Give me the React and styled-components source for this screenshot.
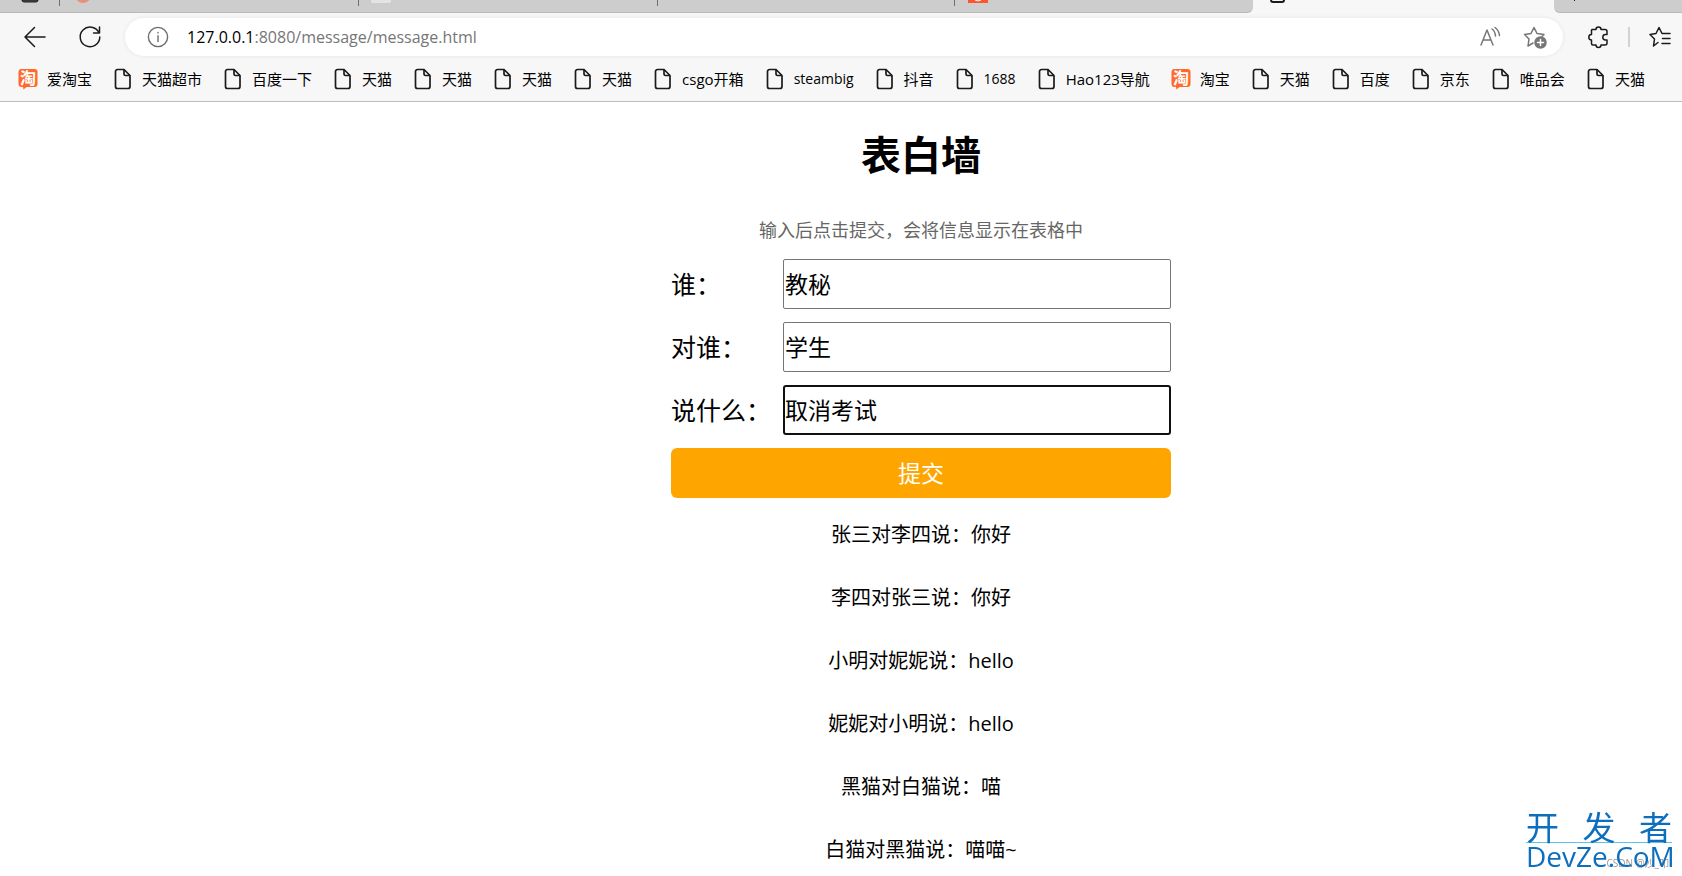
import { useState } from "react";
import styled, { createGlobalStyle } from "styled-components";

const GlobalStyle = createGlobalStyle`
  * {
    box-sizing: border-box;
  }
  body {
    margin: 0;
    background: #fff;
    color: #000;
    font-family: "Open Sans", "Noto Sans CJK SC", sans-serif;
    overflow: hidden;
  }
`;

const TabStrip = styled.div`
  display: flex;
  height: 13px;
  background: #f7f7f7;
  overflow: hidden;
`;

const Tab = styled.div`
  display: flex;
  align-items: flex-start;
  flex: ${(p) => p.$size} 1 ${(p) => p.$size}px;
  min-width: 0;
  padding-left: ${(p) => p.$pad || 12}px;
  background: ${(p) => (p.$active ? "#f7f7f7" : "#cdcdcd")};
  border-bottom: 1px solid ${(p) => (p.$active ? "#f7f7f7" : "#b8b8b8")};
  border-radius: ${(p) => p.$round || "0"};
`;

const TabLine = styled.span`
  width: 1px;
  background: linear-gradient(#6f6f6f 6px, #cdcdcd 6px);
  border-bottom: 1px solid #b8b8b8;
`;

const Toolbar = styled.div`
  display: flex;
  align-items: center;
  height: 47px;
  padding: 0 10px 0 23px;
  background: #f7f7f7;
`;

const IconButton = styled.button`
  display: flex;
  padding: 0;
  margin: 0 ${(p) => p.$right || 0}px 0 0;
  border: 0;
  background: none;
  color: ${(p) => p.$color || "#1b1b1b"};
`;

const AddressBar = styled.div`
  display: flex;
  align-items: center;
  flex: 1;
  height: 38px;
  margin-right: 23px;
  padding: 0 16px 0 22px;
  border-radius: 19px;
  background: #fff;
  box-shadow: 0 0 4px rgba(0, 0, 0, 0.08);
`;

const Url = styled.div`
  flex: 1;
  margin-left: 18px;
  color: #767676;
  font-size: 16px;
  line-height: 24px;
  b {
    color: #000;
    font-weight: 400;
  }
`;

const Divider = styled.span`
  width: 2px;
  height: 20px;
  margin-right: 18px;
  background: #d2d2d2;
`;

const Bookmarks = styled.nav`
  display: flex;
  align-items: center;
  gap: 21px;
  height: 42px;
  padding: 0 18px 4px;
  background: #f7f7f7;
  border-bottom: 1px solid #bdbdbd;
`;

const Bookmark = styled.a`
  display: flex;
  align-items: center;
  gap: 9px;
  color: #000;
  font-size: ${(p) => (p.$latin ? 14 : 15)}px;
  line-height: 20px;
  white-space: nowrap;
  text-decoration: none;
`;

const Page = styled.main`
  padding-left: 160px;
`;

const Wall = styled.div`
  width: 500px;
  margin: 0 auto;
  text-align: center;
`;

const Title = styled.h1`
  margin: 0;
  padding: 25px 0;
  font-size: 40px;
  line-height: 56px;
`;

const Hint = styled.p`
  margin: 0;
  padding: 10px 0 16px;
  color: #666;
  font-size: 18px;
  line-height: 25px;
`;

const Form = styled.form`
  display: grid;
  gap: 13px;
`;

const Row = styled.div`
  display: flex;
  height: 50px;
`;

const Label = styled.label`
  width: 112px;
  font-size: 25px;
  line-height: 50px;
  text-align: left;
`;

const TextInput = styled.input`
  flex: 1;
  min-width: 0;
  height: 50px;
  padding: 0 1px 2px;
  border: 1px solid #767676;
  border-radius: 2px;
  outline: none;
  font-family: inherit;
  font-size: 23px;
  &:focus {
    padding: 0 0 2px;
    border: 2px solid #101010;
    border-radius: 3px;
  }
`;

const Submit = styled.button`
  height: 50px;
  padding: 0 0 2px;
  border: 0;
  border-radius: 6px;
  background: orange;
  color: #fff;
  font-family: inherit;
  font-size: 23px;
`;

const Messages = styled.ul`
  display: grid;
  gap: 13px;
  margin: 0;
  padding: 12px 0 0;
  list-style: none;
`;

const Message = styled.li`
  font-size: 20px;
  line-height: 50px;
`;

const Watermark = styled.div`
  position: fixed;
  right: 10px;
  bottom: 7px;
  width: 146px;
  color: #0d6ebd;
`;

const MarkTop = styled.div`
  display: flex;
  justify-content: space-between;
  border-bottom: 1px solid #59c4e8;
  font-size: 33px;
  line-height: 28px;
`;

const MarkBottom = styled.div`
  font-size: 28px;
  line-height: 26px;
`;

const Credit = styled.div`
  position: absolute;
  right: 3px;
  bottom: 0;
  z-index: -1;
  color: #999;
  font-size: 10px;
  line-height: 12px;
`;

function Svg({ size = 24, children }) {
  return (
    <svg
      width={size}
      height={size}
      viewBox="0 0 24 24"
      fill="none"
      stroke="currentColor"
      strokeWidth="1.5"
      strokeLinecap="round"
      strokeLinejoin="round"
    >
      {children}
    </svg>
  );
}

function PageIcon() {
  return (
    <svg width="20" height="22" viewBox="0 0 20 22" fill="none" stroke="#1b1b1b" strokeWidth="1.7" strokeLinejoin="round">
      <path d="M4.500 1.500H11l6 6V18.500a2 2 0 0 1-2 2H4.500a2 2 0 0 1-2-2V3.500a2 2 0 0 1 2-2z" />
      <path d="M11 1.500v4.500a1.500 1.500 0 0 0 1.500 1.500H17" />
    </svg>
  );
}

function TaobaoIcon() {
  return (
    <svg width="20" height="22" viewBox="0 0 20 22" overflow="visible">
      <path d="M3.500 1h13A3 3 0 0 1 19.500 4v12a3 3 0 0 1-3 3H8.500L5.500 21.500 5 19H3.500a3 3 0 0 1-3-3V4a3 3 0 0 1 3-3z" fill="#ff6a2c" />
      <text x="10" y="16" textAnchor="middle" fontSize="16" fontWeight="700" fill="#fff">淘</text>
    </svg>
  );
}

const bookmarks = [
  "爱淘宝", "天猫超市", "百度一下", "天猫", "天猫", "天猫", "天猫", "csgo开箱", "steambig",
  "抖音", "1688", "Hao123导航", "淘宝", "天猫", "百度", "京东", "唯品会", "天猫",
];

const messages = [
  "张三对李四说：你好",
  "李四对张三说：你好",
  "小明对妮妮说：hello",
  "妮妮对小明说：hello",
  "黑猫对白猫说：喵",
  "白猫对黑猫说：喵喵~",
];

const fields = [
  { id: "from", label: "谁：" },
  { id: "to", label: "对谁：" },
  { id: "say", label: "说什么：" },
];

function Browser() {
  return (
    <header>
      <TabStrip>
        <Tab $size={59} $pad={21}>
          <svg width="18" height="3"><path d="M1 0q0 2 2 2h12q2 0 2-2z" fill="#555" stroke="#1b1b1b" /></svg>
        </Tab>
        <TabLine />
        <Tab $size={298} $pad={15}>
          <svg width="16" height="4"><circle cx="8" cy="-5" r="8" fill="#e8917a" /></svg>
        </Tab>
        <TabLine />
        <Tab $size={298}>
          <svg width="20" height="4"><rect y="-8" width="20" height="11" rx="2" fill="#e4e4e4" /></svg>
        </Tab>
        <TabLine />
        <Tab $size={297} />
        <TabLine />
        <Tab $size={298} $pad={13} $round="0 0 6px 0">
          <svg width="20" height="3"><rect width="20" height="3" fill="#ff5430" /><path d="M7 0q3 2 6 0" stroke="#fff" fill="none" /></svg>
        </Tab>
        <Tab $size={301} $pad={17} $active>
          <svg width="15" height="4"><path d="M1 0q0 2 2 2h9q2 0 2-2" fill="none" stroke="#1b1b1b" strokeWidth="2" /></svg>
        </Tab>
        <Tab $size={128} $pad={20} $round="0 0 0 6px">
          <svg width="2" height="2"><rect width="1" height="1" fill="#1b1b1b" /></svg>
        </Tab>
      </TabStrip>
      <Toolbar>
        <IconButton aria-label="返回" $right={31}>
          <Svg><path d="M22 12H2.500M11.500 2.500 2 12l9.500 9.500" /></Svg>
        </IconButton>
        <IconButton aria-label="刷新" $right={23}>
          <Svg><path d="M21 8A9.800 9.800 0 1 0 21.800 12M21.500 2v6h-6" /></Svg>
        </IconButton>
        <AddressBar>
          <IconButton aria-label="网站信息" $color="#6b6b6b">
            <Svg size={22}><circle cx="12" cy="12" r="10.500" /><path d="M12 10.500v6.500M12 7v.5" /></Svg>
          </IconButton>
          <Url><b>127.0.0.1</b>:8080/message/message.html</Url>
          <IconButton aria-label="朗读" $right={21} $color="#767676">
            <Svg><path d="M3 20 9 5l6 15M5 15h8M14 4q3 2 3.500 7M17 2.500q4 3 4.500 8" /></Svg>
          </IconButton>
          <IconButton aria-label="收藏" $color="#767676">
            <Svg>
              <path d="M10 18l-5 3 1-7L1.500 9.500l6.500-1L11 2.500l3 6 7 1-2 2" />
              <circle cx="17.500" cy="17.500" r="5.500" fill="currentColor" />
              <path d="M17.500 14.500v6M14.500 17.500h6" stroke="#fff" />
            </Svg>
          </IconButton>
        </AddressBar>
        <IconButton aria-label="扩展" $right={18}>
          <Svg>
            <path d="M6 4.500h4a2.500 2.500 0 0 1 5 0h4a2 2 0 0 1 2 2v3h-1.500a2.700 2.700 0 0 0 0 5.400H21v3a2 2 0 0 1-2 2h-4a2.500 2.500 0 0 1-5 0H7a1.500 1.500 0 0 1-1.500-1.500V15a2.700 2.700 0 0 1 0-5.400V5z" />
          </Svg>
        </IconButton>
        <Divider />
        <IconButton aria-label="收藏夹">
          <Svg><path d="M10 17.500l-4.500 3.500 1-7L2 9.500l6-1L11 2.500l3 6h8M14.500 13.500H22M14 18.500h8" /></Svg>
        </IconButton>
      </Toolbar>
      <Bookmarks>
        {bookmarks.map((name, i) => (
          <Bookmark key={i} href="#" $latin={/^\w+$/.test(name)}>
            {name.includes("淘宝") ? <TaobaoIcon /> : <PageIcon />}
            {name}
          </Bookmark>
        ))}
      </Bookmarks>
    </header>
  );
}

function App() {
  const [values, setValues] = useState({ from: "教秘", to: "学生", say: "取消考试" });

  return (
    <>
      <GlobalStyle />
      <Browser />
      <Page>
        <Wall>
          <Title>表白墙</Title>
          <Hint>输入后点击提交，会将信息显示在表格中</Hint>
          <Form onSubmit={(e) => e.preventDefault()}>
            {fields.map(({ id, label }) => (
              <Row key={id}>
                <Label htmlFor={id}>{label}</Label>
                <TextInput
                  id={id}
                  autoFocus={id === "say"}
                  value={values[id]}
                  onChange={(e) => setValues({ ...values, [id]: e.target.value })}
                />
              </Row>
            ))}
            <Submit>提交</Submit>
          </Form>
          <Messages>
            {messages.map((text) => (
              <Message key={text}>{text}</Message>
            ))}
          </Messages>
        </Wall>
      </Page>
      <Watermark>
        <MarkTop><span>开</span><span>发</span><span>者</span></MarkTop>
        <MarkBottom>DevZe.CoM</MarkBottom>
        <Credit>CSDN @沙_叩</Credit>
      </Watermark>
    </>
  );
}

export default App;
